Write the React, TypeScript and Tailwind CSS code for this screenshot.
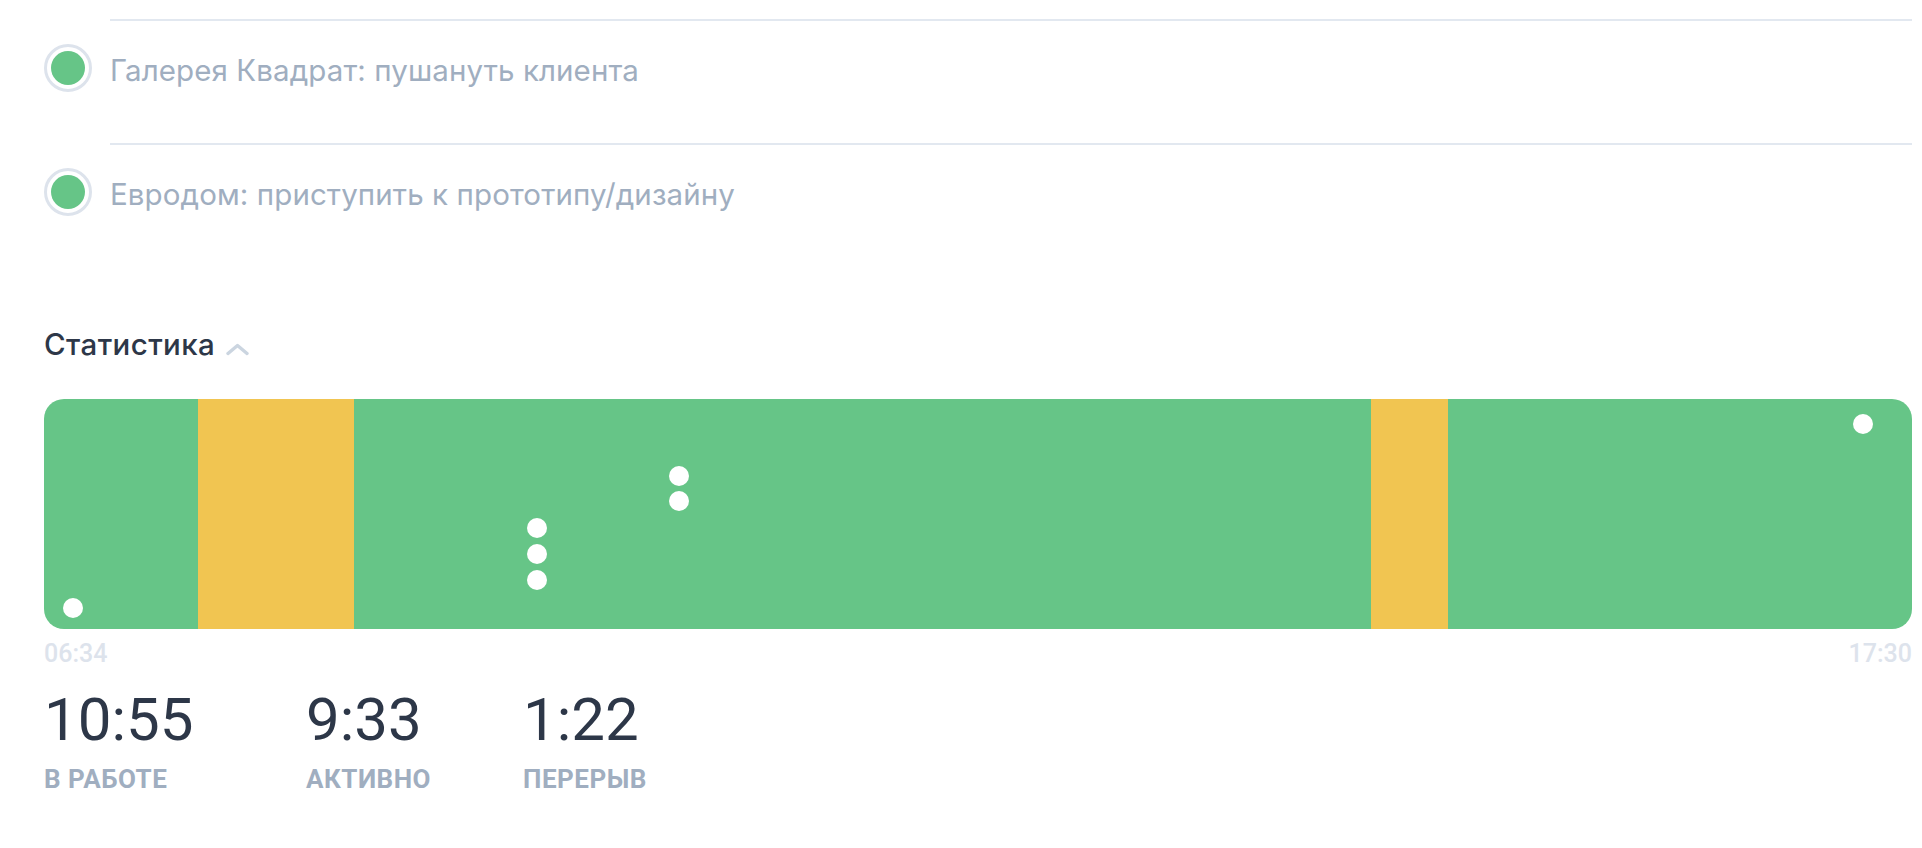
import React from "react";

const tasks = [
  "Галерея Квадрат: пушануть клиента",
  "Евродом: приступить к прототипу/дизайну",
];

const START = 6 * 60 + 34;
const END = 17 * 60 + 30;
const TOTAL = END - START;

const segments: { kind: "work" | "break"; minutes: number }[] = [
  { kind: "work", minutes: 54 },
  { kind: "break", minutes: 55 },
  { kind: "work", minutes: 357 },
  { kind: "break", minutes: 27 },
  { kind: "work", minutes: 163 },
];

const stats = [
  { value: "10:55", label: "В РАБОТЕ", w: "w-[262px]" },
  { value: "9:33", label: "АКТИВНО", w: "w-[217px]" },
  { value: "1:22", label: "ПЕРЕРЫВ", w: "w-auto" },
];

function Dot({ className }: { className: string }) {
  return <span className={"absolute h-[20px] w-[20px] rounded-full bg-white " + className} />;
}

export default function App() {
  return (
    <div
      className="min-h-[848px] w-full bg-white pl-[44px] pr-[10px] pt-[19px]"
      style={{ fontFamily: "Roboto, 'Noto Sans', sans-serif" }}
    >
      {tasks.map((t) => (
        <div key={t} className="flex">
          <div className="w-[66px] shrink-0 pt-[25px]">
            <div className="flex h-[48px] w-[48px] items-center justify-center rounded-full border-[3px] border-[#dde3ec] bg-white">
              <div className="h-[34px] w-[34px] rounded-full bg-[#66c587]" />
            </div>
          </div>
          <div className="h-[124px] flex-1 border-t-2 border-[#e2e8f0] pt-[32px]">
            <div className="font-['Inter',sans-serif] text-[29.5px] leading-[34px] tracking-[0.1px] text-[#a0aec0]">{t}</div>
          </div>
        </div>
      ))}

      <div className="mt-[60px] flex items-start">
        <h2 className="font-['Inter',sans-serif] text-[29.5px] font-medium leading-[34px] tracking-[0.4px] text-[#2d3748]">Статистика</h2>
        <svg className="ml-[11px] mt-[16px]" width="23" height="13" viewBox="0 0 23 13" fill="none">
          <path d="M2 10.5L11.5 2.5L21 10.5" stroke="#cbd5e0" strokeWidth="3.4" strokeLinecap="round" strokeLinejoin="round" />
        </svg>
      </div>

      <div className="relative mt-[38px] flex h-[230px] overflow-hidden rounded-[20px]">
        {segments.map((s, i) => (
          <div
            key={i}
            className={s.kind === "work" ? "h-full bg-[#66c587]" : "h-full bg-[#f1c551]"}
            style={{ width: `${(s.minutes / TOTAL) * 100}%` }}
          />
        ))}
        <Dot className="left-[19px] top-[199px]" />
        <Dot className="left-[483px] top-[119px]" />
        <Dot className="left-[483px] top-[145px]" />
        <Dot className="left-[483px] top-[171px]" />
        <Dot className="left-[625px] top-[67px]" />
        <Dot className="left-[625px] top-[92px]" />
        <Dot className="left-[1809px] top-[15px]" />
      </div>

      <div className="mt-[10px] flex justify-between text-[25px] font-medium leading-[29px] text-[#dde3ec]">
        <span>06:34</span>
        <span>17:30</span>
      </div>

      <div className="mt-[17px] flex">
        {stats.map((s) => (
          <div key={s.value} className={s.w + " shrink-0"}>
            <div className="text-[60px] leading-[70px] text-[#2d3748]">{s.value}</div>
            <div className="mt-[9px] text-[26px] font-bold leading-[30px] tracking-[0.5px] text-[#a0aec0]">{s.label}</div>
          </div>
        ))}
      </div>
    </div>
  );
}
